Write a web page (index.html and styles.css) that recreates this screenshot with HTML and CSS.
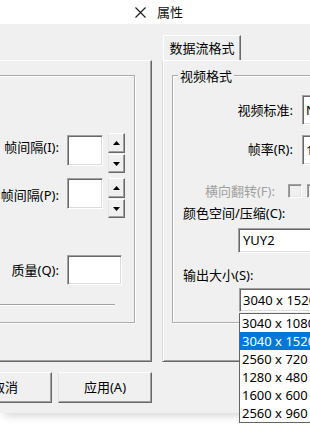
FILE: index.html
```html
<!DOCTYPE html>
<html lang="zh-CN">
<head>
<meta charset="utf-8">
<title>属性</title>
<link rel="stylesheet" href="styles.css">
</head>
<body>
<div class="screen">
  <div class="titlebar">
    <svg class="close" width="11" height="11" viewBox="0 0 11 11"><path d="M0.5 0.5 L10.5 10.5 M10.5 0.5 L0.5 10.5" stroke="#1a1a1a" stroke-width="1.1" fill="none"/></svg>
    <span class="title">属性</span>
  </div>
  <div class="dialog">
    <div class="sheets">
      <div class="page page-left">
        <div class="group group-left">
          <div class="row row-i">
            <span class="lbl lbl-left lbl-i">帧间隔(I):</span>
            <div class="edit edit-short edit-i"></div>
            <div class="spin">
              <div class="spin-btn spin-up"><svg width="7" height="4" viewBox="0 0 7 4"><polygon points="0,4 3.5,0 7,4" fill="#000"/></svg></div>
              <div class="spin-btn spin-down"><svg width="7" height="4" viewBox="0 0 7 4"><polygon points="0,0 7,0 3.5,4" fill="#000"/></svg></div>
            </div>
          </div>
          <div class="row row-p">
            <span class="lbl lbl-left lbl-p">帧间隔(P):</span>
            <div class="edit edit-short"></div>
            <div class="spin">
              <div class="spin-btn spin-up"><svg width="7" height="4" viewBox="0 0 7 4"><polygon points="0,4 3.5,0 7,4" fill="#000"/></svg></div>
              <div class="spin-btn spin-down"><svg width="7" height="4" viewBox="0 0 7 4"><polygon points="0,0 7,0 3.5,4" fill="#000"/></svg></div>
            </div>
          </div>
          <div class="row row-q">
            <span class="lbl lbl-left lbl-q">质量(Q):</span>
            <div class="edit edit-q"></div>
          </div>
          <div class="separator"></div>
        </div>
      </div>
      <div class="sheet-right">
        <div class="tab">数据流格式</div>
        <div class="page page-right">
          <div class="group group-right">
            <div class="caption">视频格式</div>
            <div class="row row-std">
              <span class="lbl lbl-right">视频标准:</span>
              <div class="edit edit-wide">NTSC_M</div>
            </div>
            <div class="row row-rate">
              <span class="lbl lbl-right lbl-rate">帧率(R):</span>
              <div class="edit edit-wide">15.000</div>
            </div>
            <div class="row row-flip">
              <span class="lbl lbl-flip">横向翻转(F):</span>
              <div class="check"></div>
              <div class="check check-next"></div>
            </div>
            <div class="lbl lbl-block lbl-color">颜色空间/压缩(C):</div>
            <div class="edit edit-yuy">YUY2</div>
            <div class="lbl lbl-block lbl-size">输出大小(S):</div>
            <div class="edit edit-combo">3040 x 1520</div>
          </div>
        </div>
      </div>
    </div>
    <div class="buttons">
      <button class="btn">取消</button>
      <button class="btn">应用(A)</button>
    </div>
  </div>
  <ul class="dropdown">
    <li class="item">3040 x 1080</li>
    <li class="item selected">3040 x 1520</li>
    <li class="item">2560 x 720</li>
    <li class="item">1280 x 480</li>
    <li class="item">1600 x 600</li>
    <li class="item">2560 x 960</li>
  </ul>
</div>
</body>
</html>
```

FILE: styles.css
```css
* { box-sizing: border-box; }

html, body {
  margin: 0;
  padding: 0;
}

body {
  width: 310px;
  height: 430px;
  overflow: hidden;
  background: #ffffff;
  font-family: "Noto Sans", "Noto Sans CJK SC", sans-serif;
  font-size: 13px;
  line-height: 16px;
  color: #000000;
}

.screen {
  position: relative;
  width: 310px;
  height: 430px;
  overflow: hidden;
}

/* title bar */
.titlebar {
  height: 24px;
  background: #ffffff;
  display: flex;
  align-items: center;
  padding-left: 135px;
}

.close { flex: none; }

.title {
  margin-left: 11px;
  color: #111;
}

/* dialog body */
.dialog {
  position: relative;
  height: 389px;
  padding-top: 11px;
  background: #f0f0f0;
  box-shadow: 0 7px 8px -4px rgba(0, 0, 0, 0.16);
}

.sheets {
  display: flex;
  align-items: flex-start;
}

.page {
  flex: none;
  height: 302px;
  padding-top: 14px;
}

.page-left {
  width: 162px;
  margin-left: -10px;
  margin-top: 25px;
  padding-right: 16px;
  border-top: 1px solid #ffffff;
  border-right: 1px solid #696969;
  border-bottom: 1px solid #696969;
  box-shadow: inset -1px -1px 0 #a0a0a0;
}

.sheet-right {
  flex: none;
  width: 200px;
  margin-left: 10px;
}

.tab {
  width: 78px;
  height: 25px;
  margin-left: 1px;
  padding-top: 4px;
  text-align: center;
  border-top: 1px solid #ffffff;
  border-left: 1px solid #ffffff;
  border-right: 1px solid #696969;
  box-shadow: inset -1px 0 0 #a0a0a0;
}

.page-right {
  width: 200px;
  border-top: 1px solid #ffffff;
  border-left: 1px solid #dadada;
  border-bottom: 1px solid #696969;
  box-shadow: inset 1px 0 0 #ffffff, inset 0 -1px 0 #a0a0a0;
}

/* group boxes (etched) */
.group {
  height: 248px;
  border: 1px solid #acacac;
  box-shadow: inset 1px 1px 0 #ffffff, 1px 1px 0 #ffffff;
}

.group-right {
  margin-left: 9px;
  padding-left: 10px;
}

.caption {
  display: table;
  margin-top: -8px;
  margin-left: -5px;
  padding: 0 2px;
  background: #f0f0f0;
}

/* rows */
.row {
  display: flex;
  align-items: flex-start;
}

.lbl {
  flex: none;
  white-space: nowrap;
}

.lbl-left {
  width: 68px;
  text-align: right;
}

.row-i { margin-top: 57px; }
.lbl-i { margin-top: 6px; }

.row-p { margin-top: 5px; }
.lbl-p { margin-top: 9px; }

.row-q { margin-top: 37px; }
.lbl-q { margin-top: 7px; }

.separator {
  width: 124px;
  height: 2px;
  margin-top: 19px;
  border-top: 1px solid #a0a0a0;
  border-bottom: 1px solid #ffffff;
}

/* sunken edit fields */
.edit {
  flex: none;
  background: #ffffff;
  border: 1px solid;
  border-color: #a0a0a0 #ffffff #ffffff #a0a0a0;
  box-shadow: inset 1px 1px 0 #696969, inset -1px -1px 0 #dcdcdc;
  white-space: nowrap;
  overflow: hidden;
}

.edit-short {
  width: 36px;
  height: 31px;
  margin-left: 8px;
}

.edit-i { margin-top: 2px; }

.edit-q {
  width: 55px;
  height: 30px;
  margin-left: 8px;
}

/* spin buttons */
.spin {
  flex: none;
  width: 17px;
  margin-left: 5px;
  display: flex;
  flex-direction: column;
  gap: 1px;
}

.spin-btn {
  display: flex;
  align-items: center;
  justify-content: center;
  background: #f0f0f0;
  border: 1px solid;
  border-color: #ffffff #696969 #696969 #e3e3e3;
  box-shadow: inset -1px -1px 0 #a0a0a0;
}

.spin-up { height: 20px; }
.spin-down { height: 19px; }

/* right group rows */
.lbl-right {
  width: 110px;
  text-align: right;
}

.edit-wide {
  width: 60px;
  height: 30px;
  margin-left: 9px;
  padding-left: 3px;
  line-height: 28px;
}

.row-std {
  margin-top: 11px;
  align-items: center;
}

.row-rate { margin-top: 10px; }
.lbl-rate { margin-top: 6px; }

.row-flip {
  margin-top: 18px;
  height: 16px;
}

.lbl-flip {
  width: 92px;
  text-align: right;
  color: #a0a0a0;
}

.check {
  flex: none;
  width: 14px;
  height: 14px;
  margin-top: 1px;
  margin-left: 13px;
  background: #f0f0f0;
  border: 1px solid;
  border-color: #a0a0a0 #ffffff #ffffff #a0a0a0;
  box-shadow: inset 1px 1px 0 #8a8a8a, inset -1px -1px 0 #e3e3e3;
}

.check-next { margin-left: 5px; }

.lbl-block { display: block; }

.lbl-color { margin-top: 6px; }

.edit-yuy {
  width: 90px;
  height: 25px;
  margin-top: 7px;
  margin-left: 55px;
  padding-left: 4px;
  line-height: 23px;
}

.lbl-size { margin-top: 14px; }

.edit-combo {
  width: 90px;
  height: 24px;
  margin-top: 5px;
  margin-left: 56px;
  padding-left: 3px;
  line-height: 23px;
}

/* buttons */
.buttons {
  display: flex;
  gap: 6px;
  margin-top: 10px;
  margin-left: -42px;
}

.btn {
  flex: none;
  width: 94px;
  height: 31px;
  padding: 0;
  font: inherit;
  line-height: 29px;
  color: #000;
  background: #f0f0f0;
  border: 1px solid;
  border-color: #ffffff #696969 #696969 #e3e3e3;
  box-shadow: inset -1px -1px 0 #a0a0a0;
}

/* open combo list (overlay) */
.dropdown {
  position: absolute;
  left: 239px;
  top: 313px;
  width: 100px;
  height: 110px;
  margin: 0;
  padding: 0;
  list-style: none;
  background: #ffffff;
  border: 1px solid #646464;
}

.item {
  height: 18px;
  line-height: 18px;
  padding-left: 2px;
  white-space: nowrap;
}

.selected {
  background: #0078d7;
  color: #ffffff;
}
```
